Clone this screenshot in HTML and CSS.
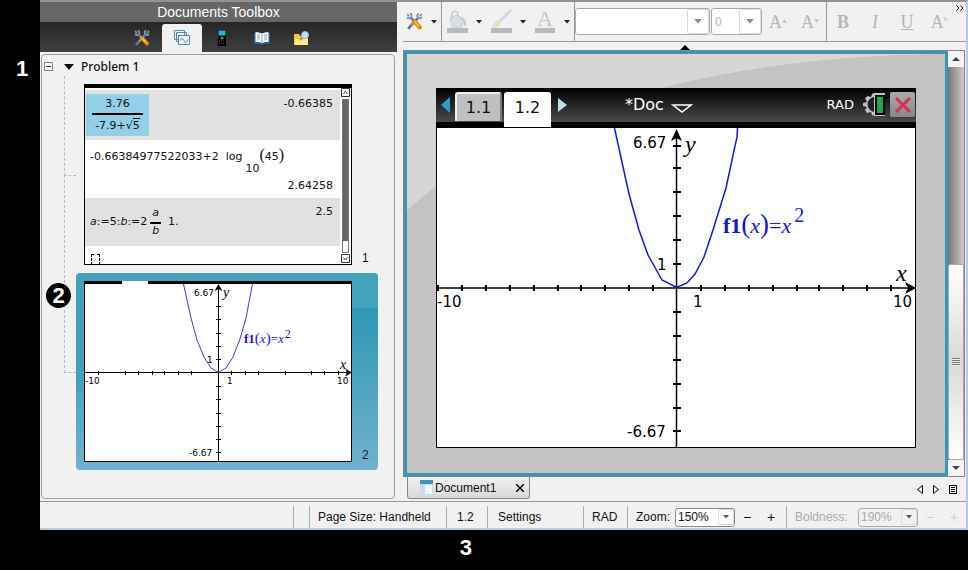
FILE: index.html
```html
<!DOCTYPE html>
<html lang="en">
<head>
    <meta charset="UTF-8">
    <meta name="viewport" content="width=device-width, initial-scale=1.0">
    <title>Documents Workspace</title>
    <link rel="stylesheet" href="styles.css">
</head>
<body>

<!-- Shared icons -->
<svg class="sprite" aria-hidden="true">
    <symbol id="tools" viewBox="0 0 16 16">
        <path d="M1 1 3 3M1 4Q3 6 5 4Q6 2 4 0" fill="none" stroke="#7c98ad" stroke-width="1.8"/>
        <path d="M5 5 8 8M8 8 2 15" stroke="#5c7f9b" stroke-width="2.6"/>
        <path d="M15 1 13 3M15 4Q13 6 11 4Q10 2 12 0" fill="none" stroke="#7c98ad" stroke-width="1.8"/>
        <path d="M11 5 8 8" stroke="#5c7f9b" stroke-width="2.4"/>
        <path d="M8 8 13 13.5" stroke="#e88a17" stroke-width="4" stroke-linecap="round"/>
        <path d="M8 8 12 12.5" stroke="#ffc35c" stroke-width="1.2"/>
        <path d="M7 9 5 11.500" stroke="#e88a17" stroke-width="2"/>
    </symbol>
    <symbol id="down" viewBox="0 0 6 4"><path d="M0 0h6L3 3.500z" fill="currentColor"/></symbol>
</svg>

<aside class="callout-side"><span class="callout">1</span></aside>

<div class="app">
    <div class="workspace">

        <!-- Documents toolbox -->
        <section class="toolbox">
            <h1>Documents Toolbox</h1>
            <nav class="toolbox-tabs">
                <button type="button" aria-label="Document tools"><svg width="16" height="16"><use href="#tools"/></svg></button>
                <button type="button" class="active" aria-label="Page sorter">
                    <svg width="16" height="16" viewBox="0 0 16 16" fill="#eef5f9" stroke="#4d8db0">
                        <path d="M.5 .5h10v9h-10zM2.500 2.500h10v9h-10z"/>
                        <path d="M4.500 5.500h11v9h-11z"/>
                        <path d="M6 10.500q2-4 4 0t4-1" fill="none"/>
                    </svg>
                </button>
                <button type="button" aria-label="Handhelds">
                    <svg width="8" height="16" viewBox="0 0 8 16">
                        <path d="M0 0h8v16H0z" fill="#000"/><path d="M.5 .5h7v5h-7z" fill="#27b5dc"/>
                        <circle cx="4" cy="8" r="1.500" fill="#777"/><path d="M1 11h6M1 13.500h6" stroke="#444" stroke-dasharray="1 1"/>
                    </svg>
                </button>
                <button type="button" aria-label="Utilities">
                    <svg width="16" height="13" viewBox="0 0 16 13">
                        <path d="M0 1h16v11H9L8 13 7 12H0z" fill="#1e66a3"/>
                        <path d="M1.500 0Q5 0 8 1.500 11 0 14.500 0V10Q11 9.500 8 11 5 9.500 1.500 10z" fill="#fff"/>
                        <path d="M8 1.500V11M3 3h3M3 5h3M3 7h3M10 3h3M10 5h3M10 7h3" stroke="#8aa3b6"/>
                    </svg>
                </button>
                <button type="button" aria-label="Content explorer">
                    <svg width="16" height="15" viewBox="0 0 16 15">
                        <path d="M0 3h5l1 2h8v9H0z" fill="#f2c83b"/><path d="M1 8h13v6H1z" fill="#ffe98c"/>
                        <path d="M6 9 9 6" stroke="#8a8f94" stroke-width="2"/>
                        <circle cx="11" cy="4" r="3.500" fill="#c4def5" stroke="#9cb6cc"/>
                    </svg>
                </button>
            </nav>

            <div class="sorter">
                <div class="problem">
                    <button type="button" class="collapse" aria-label="Collapse"></button>
                    <svg width="10" height="6"><path d="M0 0h10L5 6z"/></svg>
                    <h2>Problem 1</h2>
                </div>
                <ul class="pages">
                    <li class="page">
                        <div class="thumb calc">
                            <div class="calc-rows">
                                <div class="entry shaded">
                                    <span class="fraction picked">
                                        <span class="top">3.76</span>
                                        <span>-7.9+√<span class="radicand">5</span></span>
                                    </span>
                                    <span class="result">-0.66385</span>
                                </div>
                                <div class="entry tall">
                                    <span class="log">-0.66384977522033+2 &nbsp;log<sub>10</sub><span class="paren">(</span>45<span class="paren">)</span></span>
                                    <span class="result low">2.64258</span>
                                </div>
                                <div class="entry shaded third">
                                    <span class="assign"><i>a</i>:=5:<i>b</i>:=2<span class="fraction small"><i class="top">a</i><i>b</i></span>&nbsp; 1.</span>
                                    <span class="result">2.5</span>
                                </div>
                                <div class="entry-cursor"></div>
                            </div>
                            <div class="calc-scroll">
                                <svg width="10" height="10" fill="none" stroke="#333"><path d="M.5 .5h8v8h-8zM2.500 6 4.500 3.500 6.500 6"/></svg>
                                <div class="calc-track"></div>
                                <svg width="10" height="10" fill="none" stroke="#333"><path d="M.5 .5h8v8h-8zM2.500 3.500 4.500 6 6.500 3.500"/></svg>
                            </div>
                        </div>
                        <span class="page-number">1</span>
                    </li>
                    <li class="page selected">
                        <span class="callout-dot">2</span>
                        <svg class="thumb graph-small" viewBox="0 0 268 181">
                            <path d="M0 0h268v181H0z" fill="#fff"/>
                            <path d="M.5 0v180.500h267V0" fill="none" stroke="#000"/>
                            <path d="M0 0h38v3H0zM64 0h204v3H64z"/>
                            <path d="M134.500 4v177M0 91.500h267" stroke="#000"/>
                            <path d="M134.500 3l4 7-4-2-4 2zM268 91.500l-7-4 2 4-2 4z"/>
                            <path d="M14.500 90v4M41.500 90v4M54.500 90v4M68.500 90v4M80.500 90v4M94.500 90v4M107.500 90v4M147.500 90v4M161.500 90v4M174.500 90v4M201.500 90v4M227.500 90v4M240.500 90v4M254.500 90v4M132 25.500h5M132 38.500h5M132 52.500h5M132 65.500h5M132 78.500h5M132 105.500h5M132 118.500h5M132 132.500h5M132 145.500h5M132 158.500h5M132 171.500h5" stroke="#000"/>
                            <path d="M99.500 3 107 37 113 59 120 76 127 87 134.500 91.500 142 87 149 76 156 58 162 37 168.500 3" fill="none" stroke="#3d3dd0"/>
                            <g class="small-labels">
                                <text x="110" y="15">6.67</text><text x="105" y="175">-6.67</text>
                                <text x="123" y="82">1</text><text x="143" y="103">1</text>
                                <text x="1" y="103">-10</text><text x="253" y="103">10</text>
                                <text class="axis" x="139" y="16">y</text><text class="axis" x="256" y="88">x</text>
                            </g>
                            <text class="formula" x="160" y="62"><tspan class="name">f1</tspan><tspan class="bracket">(</tspan><tspan class="var">x</tspan><tspan class="bracket">)</tspan>=<tspan class="var">x</tspan><tspan class="power" dx="1" dy="-5">2</tspan></text>
                        </svg>
                        <span class="page-number">2</span>
                    </li>
                </ul>
            </div>
        </section>

        <!-- Work area -->
        <main class="work">
            <div class="toolbar">
                <button type="button" class="tool first" aria-label="Tools"><svg width="17" height="17"><use href="#tools"/></svg><svg class="drop" width="6" height="4"><use href="#down"/></svg></button>
                <span class="rule"></span>
                <button type="button" class="tool" aria-label="Fill colour">
                    <svg width="21" height="23" viewBox="0 0 21 23">
                        <path d="M3 8 10 5 17 9 15 17H5z" fill="#dcdfe2" stroke="#c8cdd1"/>
                        <path d="M5 9V4Q7-1 11 3V8" fill="none" stroke="#c8cdd1" stroke-width="1.500"/>
                        <path d="M14 7q6 1 5 9l-2-1q0-5-4-6z" fill="#c2cbd2"/><path d="M0 18h21v5H0z" fill="#b9b9b9"/>
                    </svg>
                    <svg class="drop" width="6" height="4"><use href="#down"/></svg>
                </button>
                <button type="button" class="tool" aria-label="Line colour">
                    <svg width="21" height="23" viewBox="0 0 21 23">
                        <path d="M19 1 8 12" stroke="#c5dbe8" stroke-width="3" stroke-linecap="round"/>
                        <path d="M10 12 8 10Q3 11 1 18 8 18 10 12z" fill="#eddcc0"/><path d="M0 18h21v5H0z" fill="#b9b9b9"/>
                    </svg>
                    <svg class="drop" width="6" height="4"><use href="#down"/></svg>
                </button>
                <button type="button" class="tool" aria-label="Text colour">
                    <span class="text-colour">A</span>
                    <svg class="drop" width="6" height="4"><use href="#down"/></svg>
                </button>
                <span class="rule"></span>
                <span class="combo font-name"><select aria-label="Font"><option></option></select><svg width="8" height="5"><use href="#down"/></svg></span>
                <span class="combo font-size"><select aria-label="Font size"><option>0</option></select><svg width="8" height="5"><use href="#down"/></svg></span>
                <button type="button" class="letter" aria-label="Larger text">A<svg width="5" height="4"><path d="M0 4h5L2.500 0z"/></svg></button>
                <button type="button" class="letter" aria-label="Smaller text">A<svg width="5" height="4"><path d="M0 0h5L2.500 4z"/></svg></button>
                <span class="rule"></span>
                <button type="button" class="letter"><b>B</b></button>
                <button type="button" class="letter"><i>I</i></button>
                <button type="button" class="letter"><u>U</u></button>
                <button type="button" class="letter" aria-label="Superscript">A<sup>s</sup></button>
                <button type="button" class="more" aria-label="More">
                    <svg width="8" height="6" fill="none" stroke="#111"><path d="M.5 .5 3 3 .5 5.500M4.500 .5 7 3 4.500 5.500"/></svg>
                </button>
            </div>
            <div class="toolbar-toggle"><svg width="10" height="5"><path d="M0 5h10L5 0z"/></svg></div>

            <div class="stage">
                <div class="canvas">
                    <div class="handheld">
                        <div class="handheld-bar">
                            <svg class="previous" width="9" height="16"><path d="M9 0v16L0 8z" fill="#2a9dcd"/></svg>
                            <button type="button" class="doc-page">1.1</button>
                            <button type="button" class="doc-page current">1.2</button>
                            <svg width="9" height="14"><path d="M0 0v14L9 7z" fill="#c0dbe9"/></svg>
                            <span class="doc-name">*Doc</span>
                            <svg class="doc-menu" width="22" height="11" fill="none" stroke="#fff" stroke-width="1.500"><path d="M2 2h18L11 9z"/></svg>
                            <span class="angle">RAD</span>
                            <svg width="24" height="25" viewBox="0 0 24 25">
                                <path d="M13 1v4A7 7 0 0 0 13 20v4l-3-1-1-3-4 1-2-3 2-3-4-1v-3l4-1-2-4 3-2 3 1 1-3z" fill="#c0c0c0"/>
                                <path d="M13 6Q7 7 7 12.500T13 19z" fill="#222"/>
                                <path d="M12 1h11v23H12z" fill="#c4c4c4"/><path d="M14 4h8v18h-8z" fill="#15ad52" stroke="#000" stroke-width="2"/>
                            </svg>
                            <button type="button" class="close" aria-label="Close">
                                <svg width="16" height="16" stroke="#d9304c" stroke-width="3"><path d="M1 1 15 15M15 1 1 15"/></svg>
                            </button>
                        </div>
                        <svg class="graph" viewBox="0 0 480 320">
                            <path d="M0 0h480v320H0z" fill="#fff"/>
                            <path d="M.5 0v319.500h479V0" fill="none" stroke="#000"/>
                            <path d="M240.500 4v316M0 160h474" stroke="#000" stroke-width="1.500"/>
                            <path d="M240.500 1 246 13l-5.500-3-5.500 3zM480 160l-11-6 3 6-3 6z"/>
                            <path d="M2 157v6M26 157v6M50 157v6M74 157v6M98 157v6M122 157v6M145 157v6M169 157v6M193 157v6M217 157v6M265 157v6M289 157v6M313 157v6M337 157v6M361 157v6M383 157v6M407 157v6M431 157v6M455 157v6M237 18h8M237 40h8M237 64h8M237 88h8M237 112h8M237 136h8M237 184h8M237 208h8M237 232h8M237 256h8M237 280h8M237 303h8" stroke="#000" stroke-width="2"/>
                            <path d="M178.500 0 193 66 203 102 212 127 226 152 240.500 159.500 251 155 259 146 268 129 277 102 290 60 301 9 301.500 0" fill="none" stroke="#1717d8" stroke-width="1.500"/>
                            <g class="labels">
                                <text x="197" y="20">6.67</text><text x="191" y="309">-6.67</text>
                                <text x="221" y="142">1</text><text x="257" y="179">1</text>
                                <text x="1" y="179">-10</text><text x="457" y="179">10</text>
                                <text class="axis" x="249" y="24">y</text><text class="axis" x="460" y="153">x</text>
                            </g>
                            <text class="formula" x="287" y="105"><tspan class="name">f1</tspan><tspan class="bracket">(</tspan><tspan class="var">x</tspan><tspan class="bracket">)</tspan>=<tspan class="var">x</tspan><tspan class="power" dx="3" dy="-11">2</tspan></text>
                        </svg>
                    </div>
                </div>
                <div class="scrollbar">
                    <button type="button" aria-label="Scroll up"><svg width="8" height="4"><path d="M0 4h8L4 0z"/></svg></button>
                    <div class="scroll-track"><div class="scroll-thumb"></div></div>
                    <button type="button" aria-label="Scroll down"><svg width="8" height="4"><path d="M0 0h8L4 4z"/></svg></button>
                </div>
            </div>

            <div class="documents">
                <div class="document">
                    <svg width="13" height="15" viewBox="0 0 13 15"><path d="M0 0h13v15H0z" fill="#c3dfeb"/><path d="M0 0h13v4H0z" fill="#3f94b5"/><path d="M5 5h7v9H5z" fill="#eef7fb"/></svg>
                    <span>Document1</span>
                    <button type="button" aria-label="Close Document1"><svg width="8" height="8" stroke="#000" stroke-width="1.500"><path d="M0 0 8 8M8 0 0 8"/></svg></button>
                </div>
                <div class="document-nav">
                    <button type="button" aria-label="Previous document"><svg width="6" height="9"><path d="M5.500 .5v8L.5 4.500z" fill="none" stroke="#000"/></svg></button>
                    <button type="button" aria-label="Next document"><svg width="6" height="9"><path d="M.5 .5v8l5-4z" fill="none" stroke="#000"/></svg></button>
                    <button type="button" aria-label="Document list"><svg width="8" height="9"><path d="M.5 .5h7v8h-7zM2 2.500h4M2 4.500h4M2 6.500h4" fill="none" stroke="#000"/></svg></button>
                </div>
            </div>
        </main>
    </div>

    <!-- Status bar -->
    <footer class="status">
        <span class="cell blank"></span>
        <span class="cell size">Page Size: Handheld</span>
        <span class="cell number">1.2</span>
        <span class="cell settings">Settings</span>
        <span class="cell mode">RAD</span>
        <div class="cell zoom">
            <label for="zoom">Zoom:</label>
            <span class="combo"><select id="zoom"><option>150%</option></select><svg width="6" height="4"><use href="#down"/></svg></span>
            <button type="button">−</button><button type="button">+</button>
        </div>
        <div class="cell boldness">
            <label for="boldness">Boldness:</label>
            <span class="combo"><select id="boldness" disabled><option>190%</option></select><svg width="6" height="4"><use href="#down"/></svg></span>
            <button type="button" disabled>−</button><button type="button" disabled>+</button>
        </div>
    </footer>
</div>

<div class="callout-bottom"><span class="callout">3</span></div>

</body>
</html>
```
FILE: styles.css
```css
* {
    margin: 0;
    padding: 0;
    box-sizing: border-box;
}

body {
    display: grid;
    grid-template-columns: 40px 1fr;
    grid-template-rows: 1fr 40px;
    height: 100vh;
    background: #000;
    font-family: "Liberation Sans", Arial, sans-serif;
    font-size: 12px;
    color: #111;
}

button, select {
    border: 0;
    background: none;
    font: inherit;
    color: inherit;
}

svg {
    flex: none;
}

.sprite {
    position: absolute;
    width: 0;
    height: 0;
}

/* Callouts */
.callout {
    color: #fff;
    font-size: 22px;
    font-weight: bold;
    line-height: 24px;
}

.callout-side {
    padding: 57px 0 0 16px;
}

.callout-bottom {
    grid-column: 1 / 3;
    padding: 6px 0 0 47.5%;
}

.callout-dot {
    position: absolute;
    top: 10px;
    left: -30px;
    width: 25px;
    height: 25px;
    border-radius: 50%;
    background: #000;
    color: #fff;
    font-size: 22px;
    font-weight: bold;
    line-height: 25px;
    text-align: center;
}

/* Window */
.app {
    display: flex;
    flex-direction: column;
    min-width: 0;
    background: #f1f1f1;
    border-top: 2px solid #929296;
    border-right: 2px solid #b5cbe2;
    border-bottom: 2px solid #b5cbe2;
}

.workspace {
    display: flex;
    flex: 1;
    min-height: 0;
}

/* Toolbox */
.toolbox {
    display: flex;
    flex-direction: column;
    width: 357px;
}

.toolbox h1 {
    background: #666;
    color: #fff;
    font-size: 14px;
    font-weight: normal;
    line-height: 20px;
    text-align: center;
}

.toolbox-tabs {
    display: flex;
    justify-content: center;
    height: 30px;
    padding: 2px 0 0 7px;
    background: linear-gradient(#262626, #404040);
}

.toolbox-tabs button {
    display: flex;
    align-items: center;
    justify-content: center;
    width: 40px;
}

.toolbox-tabs .active {
    background: #f1f1f1;
    border-radius: 3px 3px 0 0;
}

.sorter {
    flex: 1;
    margin: 2px 2px 2px 1px;
    border: 1px solid #a0a0a0;
    border-radius: 4px;
}

.problem {
    display: flex;
    align-items: center;
    height: 21px;
    padding: 2px 0 0 2px;
}

.collapse {
    width: 9px;
    height: 9px;
    margin-right: 11px;
    border: 1px solid #888;
    background: linear-gradient(#333, #333) center / 5px 1px no-repeat #fff;
}

.problem h2 {
    margin-left: 7px;
    font-family: "Noto Sans", sans-serif;
    font-size: 12px;
    font-weight: 500;
    line-height: 18px;
}

.pages {
    margin-left: 34px;
    list-style: none;
}

.page {
    position: relative;
    display: flex;
    width: 302px;
    padding: 8px;
    border-radius: 4px;
}

/* Tree lines */
.page::before {
    content: "";
    position: absolute;
    top: 0;
    left: -12px;
    width: 11px;
    height: 99px;
    border-left: 1px dashed #bbb;
    border-bottom: 1px dashed #bbb;
}

.page + .page::before {
    top: -98px;
    height: 197px;
}

.page.selected {
    background:
        linear-gradient(#45a2bc 60%, #4fa5c2 60%, #72b1cd) left / 8px 100% no-repeat,
        linear-gradient(#45a2bc 18%, #2e98b5 18%, #72b1cd);
}

.page-number {
    align-self: flex-end;
    margin-left: 10px;
    color: #14143c;
}

.thumb {
    width: 268px;
    height: 181px;
}

/* Calculator thumbnail */
.calc {
    display: flex;
    border: 1px solid #000;
    border-top-width: 4px;
    background: #fff;
    font-family: "DejaVu Sans", sans-serif;
    font-size: 11px;
    line-height: 14px;
}

.calc-rows {
    flex: 1;
    padding-top: 2px;
}

.entry {
    display: flex;
    justify-content: space-between;
    height: 50px;
    padding: 4px 7px 0 5px;
}

.entry.tall {
    height: 58px;
}

.entry.third {
    height: 48px;
}

.shaded {
    background: #e1e1e1;
}

.result {
    padding-top: 3px;
}

.result.low {
    align-self: flex-end;
    padding-bottom: 5px;
    margin-left: -60px;
}

.fraction {
    display: inline-flex;
    flex-direction: column;
    align-items: center;
}

.fraction .top {
    align-self: stretch;
    padding-bottom: 2px;
    border-bottom: 2px solid #000;
    text-align: center;
}

.picked {
    width: 63px;
    height: 42px;
    margin-left: -4px;
    padding: 3px 6px;
    background: #93cfe6;
}

.picked > span + span {
    padding-top: 4px;
}

.radicand {
    border-top: 1px solid #000;
}

.log {
    white-space: nowrap;
    padding-top: 4px;
}

.log sub {
    margin-left: 3px;
    font-size: 11px;
    line-height: 0;
    vertical-align: -12px;
}

.paren {
    font-family: "Liberation Serif", serif;
    font-size: 16px;
}

.assign {
    display: flex;
    align-items: center;
    white-space: pre;
    height: 40px;
}

.fraction.small {
    margin-left: 3px;
}

.fraction.small .top {
    padding: 0 2px 2px;
}

.entry-cursor {
    width: 9px;
    height: 11px;
    margin: 8px 0 0 6px;
    border: 1px dashed #000;
    border-bottom: 0;
}

.calc-scroll {
    display: flex;
    flex-direction: column;
    align-items: center;
    width: 11px;
}

.calc-track {
    flex: 1;
    width: 7px;
    margin: 1px 0;
    border: 1px solid #777;
    background: linear-gradient(#666 93%, #fff 93%);
}

/* Graph labels */
.small-labels {
    font-family: "DejaVu Sans", sans-serif;
    font-size: 9px;
}

.labels {
    font-family: "DejaVu Sans", sans-serif;
    font-size: 15px;
}

.axis {
    font-family: "Liberation Serif", serif;
    font-size: 24px;
    font-style: italic;
}

.small-labels .axis {
    font-size: 14px;
}

.formula {
    fill: #1515d5;
    font-family: "Liberation Serif", serif;
    font-size: 22px;
}

.formula .bracket {
    font-size: 27px;
}

.formula .name {
    font-weight: bold;
}

.formula .var {
    font-style: italic;
}

.formula .power {
    font-size: 20px;
}

.graph-small .formula {
    font-size: 13px;
}

.graph-small .bracket {
    font-size: 15px;
}

.graph-small .power {
    font-size: 12px;
}

/* Toolbar */
.work {
    display: flex;
    flex: 1;
    flex-direction: column;
    min-width: 0;
    padding-left: 6px;
}

.toolbar {
    display: flex;
    align-items: center;
    height: 40px;
    border-bottom: 1px solid #999;
    color: #b5b5b5;
}

.rule {
    align-self: stretch;
    width: 1px;
    background: #999;
}

.tool {
    display: flex;
    align-items: center;
    justify-content: space-between;
    width: 44px;
    padding: 0 4px 0 5px;
}

.tool.first {
    width: 38px;
    padding-left: 3px;
}

.drop {
    color: #222;
}

.text-colour {
    width: 20px;
    border-bottom: 5px solid #b9b9b9;
    color: #c8c8c8;
    font-family: "Liberation Serif", serif;
    font-size: 22px;
    line-height: 18px;
}

.combo {
    display: flex;
    align-items: center;
    border: 1px solid #aaa;
    border-radius: 3px;
    background: #fff;
}

.combo select {
    flex: 1;
    min-width: 0;
    height: 100%;
    appearance: none;
}

.combo svg {
    box-sizing: content-box;
    padding: 5px 4px;
    border: 1px solid #ddd;
    border-radius: 2px;
    color: #555;
}

.toolbar .combo {
    height: 27px;
}

.toolbar .combo svg {
    padding: 9px 6px;
    color: #888;
}

.font-name {
    flex: 1;
}

.font-size {
    width: 51px;
    margin-left: 1px;
}

.font-size select {
    padding-left: 3px;
}

.letter {
    width: 32px;
    font-family: "Liberation Serif", serif;
    font-size: 18px;
    line-height: 24px;
    white-space: nowrap;
}

.letter svg {
    margin-bottom: 5px;
    fill: #c5c5c5;
}

.letter sup {
    font-size: 9px;
    line-height: 0;
    vertical-align: 7px;
}

.more {
    display: flex;
    align-self: flex-start;
    width: 11px;
    padding: 3px 0 0 1px;
}

.toolbar-toggle {
    height: 8px;
    line-height: 4px;
    text-align: center;
    padding-top: 2px;
}

/* Document view */
.stage {
    display: flex;
    flex: 1;
    min-height: 0;
    margin-right: 1px;
    border: 1px solid #858585;
}

.canvas {
    flex: 1;
    padding-top: 34px;
    border: 3px solid #3b95b7;
    background: radial-gradient(ellipse 607px 290px at 100% 290px, #c3c3c3 99.8%, #d6d6d6 100%);
}

.handheld {
    width: 480px;
    max-width: 100%;
    margin: 0 auto;
}

.handheld-bar {
    display: flex;
    align-items: center;
    height: 40px;
    padding: 0 1px 6px 5px;
    border-bottom: 1px solid #000;
    background: linear-gradient(#000, #4b4b4b 34px, #000 34px);
    color: #fff;
    font-family: "DejaVu Sans", sans-serif;
    font-size: 16px;
}

.doc-page {
    align-self: flex-end;
    width: 47px;
    height: 29px;
    margin-left: 5px;
    border: 2px solid #eee;
    border-right-color: #777;
    border-bottom: 0;
    border-radius: 3px 3px 0 0;
    background: #bfbfbf;
    color: #111;
}

.doc-page.current {
    height: 35px;
    margin: 0 7px -6px 2px;
    padding-bottom: 6px;
    border-color: #fff;
    background: #fff;
}

.doc-name {
    margin-left: 58px;
}

.doc-menu {
    margin: 7px 0 0 7px;
}

.angle {
    margin-left: auto;
    margin-right: 8px;
    font-size: 13px;
}

.close {
    display: flex;
    align-items: center;
    justify-content: center;
    width: 25px;
    height: 25px;
    margin-left: 4px;
    border-radius: 2px;
    background: linear-gradient(#aaa, #888);
}

.graph {
    display: block;
    width: 100%;
}

/* Scrollbar */
.scrollbar {
    display: flex;
    flex-direction: column;
    width: 16px;
}

.scrollbar button {
    display: flex;
    align-items: center;
    justify-content: center;
    height: 16px;
    background: #f4f4f4;
    fill: #444;
}

.scroll-track {
    display: flex;
    flex: 1;
    align-items: flex-end;
    background: linear-gradient(90deg, #777, #ccc);
}

.scroll-thumb {
    width: 100%;
    height: 50%;
    border: 1px solid #aaa;
    border-radius: 2px;
    background:
        repeating-linear-gradient(#777 0 1px, #eee 1px 2px) center / 8px 8px no-repeat,
        linear-gradient(#fff, #d8dada 50%, #fff);
}

/* Document tabs */
.documents {
    display: flex;
    align-items: flex-start;
    justify-content: space-between;
    height: 24px;
    padding-left: 4px;
}

.document {
    display: flex;
    align-items: center;
    width: 123px;
    height: 22px;
    padding: 0 5px 0 12px;
    border: 1px solid #888;
    border-top: 0;
    border-radius: 0 0 3px 3px;
    background: linear-gradient(#f0f0f0, #d8d8d8);
}

.document span {
    flex: 1;
    margin-left: 2px;
}

.document-nav {
    display: flex;
    gap: 10px;
    padding: 6px 9px 0 0;
}

/* Status bar */
.status {
    display: flex;
    justify-content: flex-end;
    height: 27px;
    border-top: 1px solid #999;
}

.cell {
    display: flex;
    align-items: center;
    margin-top: 4px;
    padding-left: 8px;
    border-left: 1px solid #aaa;
    white-space: nowrap;
}

.blank {
    width: 16px;
}

.size {
    width: 137px;
}

.number {
    width: 41px;
    padding-left: 10px;
}

.settings {
    width: 96px;
    padding-left: 10px;
}

.mode {
    width: 44px;
}

.zoom {
    width: 159px;
}

.boldness {
    width: 180px;
    color: #aaa;
}

.status label {
    flex: 1;
}

.status .combo {
    width: 60px;
    height: 19px;
    border-color: #888;
}

.status .combo select {
    padding-left: 2px;
}

.status button {
    width: 24px;
    font-size: 14px;
}

.zoom button:last-child {
    margin-right: 3px;
}

.boldness .combo {
    border-color: #aaa;
    background: #f1f1f1;
}

.boldness select {
    opacity: 1;
}

.boldness button {
    color: #ccc;
}
```
